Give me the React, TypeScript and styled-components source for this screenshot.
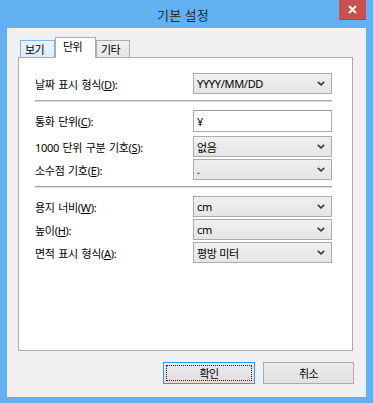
import React from "react";
import styled, { createGlobalStyle } from "styled-components";

const GlobalStyle = createGlobalStyle`
    html, body {
        margin: 0;
        padding: 0;
        background: #62b2f3;
    }
    body {
        font-family: "Noto Sans", "Noto Sans CJK KR", sans-serif;
        font-size: 11px;
        color: #000;
    }
`

const Window = styled.div`
    width: 373px;
    height: 403px;
    box-sizing: border-box;
    background-color: #62b2f3;
    padding: 0 7px 6px;
    display: flex;
    flex-direction: column;
`

const TitleBar = styled.div`
    height: 28px;
    display: grid;
    grid-template-columns: 1fr auto 1fr;
    align-items: start;
    margin: 0 -7px;
    padding-right: 7px;
`

const Title = styled.div`
    grid-column: 2;
    font-family: "Noto Sans CJK KR", sans-serif;
    font-size: 13px;
    line-height: 29px;
    color: #1f2a36;
    letter-spacing: 0.2px;
`

const CloseButton = styled.div`
    grid-column: 3;
    justify-self: end;
    width: 27px;
    height: 19px;
    background-color: #c75050;
    border-bottom: 1px solid #a84444;
    display: flex;
    align-items: center;
    justify-content: center;
`

const Client = styled.div`
    flex: 1;
    background-color: #f0f0f0;
    padding: 10px 13px 13px 11px;
    display: flex;
    flex-direction: column;
`

const TabStrip = styled.div`
    display: flex;
    align-items: flex-end;
    padding-left: 2px;
    height: 19px;
`

const Tab = styled.div<{ $active?: boolean; $hot?: boolean; $w: number }>`
    width: ${p => p.$w}px;
    box-sizing: border-box;
    height: ${p => (p.$active ? 21 : 17)}px;
    margin-bottom: ${p => (p.$active ? -1 : 0)}px;
    position: relative;
    z-index: ${p => (p.$active ? 1 : 0)};
    border: 1px solid ${p => (p.$hot ? "#7eb4ea" : "#acacac")};
    border-bottom: ${p => (p.$active ? "none" : "0")};
    background: ${p =>
        p.$active
            ? "#ffffff"
            : p.$hot
            ? "linear-gradient(#ecf4fc, #dcecfc)"
            : "linear-gradient(#f0f0f0, #e5e5e5)"};
    padding: ${p => (p.$active ? "1px 0 0 7px" : "1px 0 0 4px")};
    font-family: "Noto Sans CJK KR", sans-serif;
    font-size: 11px;
    letter-spacing: -0.5px;
    line-height: 14px;
`

const Panel = styled.div`
    flex: 1;
    background: #ffffff;
    border: 1px solid #acacac;
    padding: 15px 20px 0 16px;
    display: flex;
    flex-direction: column;
`

const Group = styled.div`
    display: flex;
    flex-direction: column;
    gap: 2px;
`

const Row = styled.div<{ $extra?: number }>`
    display: grid;
    grid-template-columns: 158px 1fr;
    align-items: center;
    margin-bottom: ${p => p.$extra ?? 0}px;
`

const Label = styled.span`
    font-family: "Noto Sans", "Noto Sans CJK KR", sans-serif;
    font-size: 11px;
    letter-spacing: -0.3px;
    word-spacing: 1px;
    white-space: nowrap;

    u {
        text-decoration: underline;
        text-underline-offset: 1px;
    }
`

const Separator = styled.div`
    height: 0;
    border-top: 1px solid #a8a8a8;
    border-bottom: 1px solid #d8d8d8;
    margin: 6px 0 8px;
`

const Combo = styled.div`
    height: 21px;
    box-sizing: border-box;
    border: 1px solid #acacac;
    background: linear-gradient(#f0f0f0, #e5e5e5);
    display: flex;
    align-items: center;
    justify-content: space-between;
    padding: 0 6px 0 3px;
    font-size: 11px;
    letter-spacing: -0.3px;
`

const TextBox = styled.div`
    height: 22px;
    box-sizing: border-box;
    border: 1px solid #abadb3;
    border-top-color: #9a9ca3;
    background: #ffffff;
    display: flex;
    align-items: center;
    padding: 0 3px;
    font-size: 11px;
`

const ButtonBar = styled.div`
    display: flex;
    justify-content: flex-end;
    gap: 8px;
    margin-top: 11px;
    margin-right: -1px;
`

const Button = styled.div<{ $default?: boolean }>`
    width: ${p => (p.$default ? 92 : 91)}px;
    height: 22px;
    box-sizing: border-box;
    border: 1px solid ${p => (p.$default ? "#3399ff" : "#acacac")};
    background: ${p => (p.$default ? "linear-gradient(#eaeaea, #dedede)" : "linear-gradient(#ececec, #e1e1e1)")};
    outline: ${p => (p.$default ? "1px dotted #222" : "none")};
    outline-offset: -4px;
    display: flex;
    align-items: center;
    justify-content: center;
    font-family: "Noto Sans CJK KR", sans-serif;
    font-size: 11px;
    letter-spacing: -0.5px;
`

function Chevron() {
    return (
        <svg width="8" height="5" viewBox="0 0 8 5">
            <polyline points="0.8,0.8 4,3.8 7.2,0.8" fill="none" stroke="#3c3c3c" strokeWidth="1.6" />
        </svg>
    );
}

function Select({ value }: { value: string }) {
    return (
        <Combo>
            <span>{value}</span>
            <Chevron />
        </Combo>
    );
}

export default function App() {
    return (
        <>
            <GlobalStyle />
            <Window>
                <TitleBar>
                    <Title>기본 설정</Title>
                    <CloseButton>
                        <svg width="9" height="9" viewBox="0 0 9 9">
                            <path d="M1 1 L8 8 M8 1 L1 8" stroke="#ffffff" strokeWidth="1.8" />
                        </svg>
                    </CloseButton>
                </TitleBar>
                <Client>
                    <TabStrip>
                        <Tab $hot $w={35}>보기</Tab>
                        <Tab $active $w={41}>단위</Tab>
                        <Tab $w={34}>기타</Tab>
                    </TabStrip>
                    <Panel>
                        <Row>
                            <Label>날짜 표시 형식(<u>D</u>):</Label>
                            <Select value="YYYY/MM/DD" />
                        </Row>
                        <Separator />
                        <Group>
                            <Row $extra={2}>
                                <Label>통화 단위(<u>C</u>):</Label>
                                <TextBox>¥</TextBox>
                            </Row>
                            <Row>
                                <Label>1000 단위 구분 기호(<u>S</u>):</Label>
                                <Select value="없음" />
                            </Row>
                            <Row>
                                <Label>소수점 기호(<u>E</u>):</Label>
                                <Select value="." />
                            </Row>
                        </Group>
                        <Separator />
                        <Group>
                            <Row>
                                <Label>용지 너비(<u>W</u>):</Label>
                                <Select value="cm" />
                            </Row>
                            <Row>
                                <Label>높이(<u>H</u>):</Label>
                                <Select value="cm" />
                            </Row>
                            <Row>
                                <Label>면적 표시 형식(<u>A</u>):</Label>
                                <Select value="평방 미터" />
                            </Row>
                        </Group>
                    </Panel>
                    <ButtonBar>
                        <Button $default>확인</Button>
                        <Button>취소</Button>
                    </ButtonBar>
                </Client>
            </Window>
        </>
    );
}
